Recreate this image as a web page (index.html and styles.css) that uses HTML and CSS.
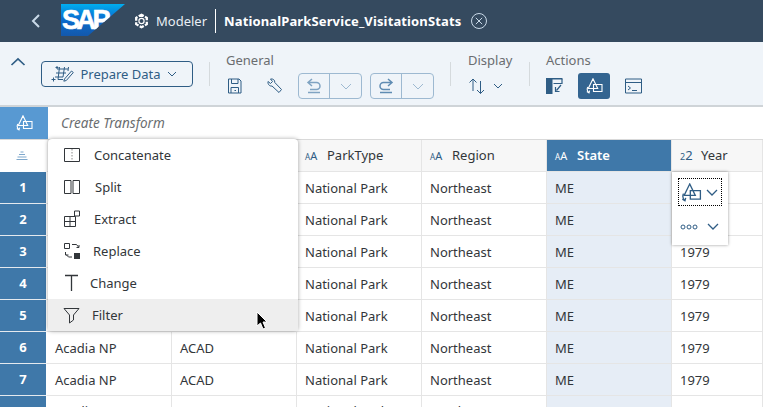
FILE: index.html
```html
<!DOCTYPE html>
<html lang="en">
<head>
    <meta charset="UTF-8">
    <title>Modeler - NationalParkService_VisitationStats</title>
    <link rel="stylesheet" href="styles.css">
</head>
<body>
    <svg class="defs" width="0" height="0">
        <symbol id="transform" viewBox="0 0 17 16">
            <path d="M7 .8 2.300 10.500h9.400zM7.500 6.500h8.500v7H7.500z" fill="none" stroke="currentColor" stroke-width="1.100"/>
            <path d="M1.800 9Q.2 11.800 2.800 14.800M.8 13.600l2.200 1.400.6-2.400" fill="none" stroke="currentColor" stroke-width="1.100"/>
        </symbol>
    </svg>

    <header class="shell">
        <svg class="back" width="10" height="16" viewBox="0 0 10 16"><path d="M8 2 2 8l6 6" fill="none" stroke="#c9d9e8" stroke-width="2"/></svg>
        <div class="logo"><span>SAP</span></div>
        <svg class="hex" width="15" height="16" viewBox="0 0 15 16"><path d="M7.500 1.800 12.800 4.800v6.400L7.500 14.200 2.200 11.200V4.800z" fill="none" stroke="#fff" stroke-width="2.300" stroke-dasharray="4.600 1.400" stroke-dashoffset="2"/><circle cx="7.500" cy="8" r="2.600" fill="none" stroke="#fff" stroke-width="1.200"/></svg>
        <span class="app">Modeler</span>
        <span class="file">NationalParkService_VisitationStats</span>
        <svg class="close" width="18" height="18" viewBox="0 0 18 18"><circle cx="9" cy="9" r="7.500" fill="none" stroke="#c9d9e8"/><path d="m5.800 5.800 6.400 6.400m0-6.400-6.400 6.400" stroke="#c9d9e8"/></svg>
    </header>

    <section class="toolbar">
        <svg class="collapse" width="16" height="10" viewBox="0 0 16 10"><path d="m1.500 8 6.500-6 6.500 6" fill="none" stroke="#2f5d85" stroke-width="1.700"/></svg>
        <button class="prepare">
            <svg width="24" height="18" viewBox="0 0 24 18"><path d="M7 4h11M6 8h10M5 12h8M9.500 2 8 14.500h5M14.500 2 13 12M18.500 2l-.5 4" fill="none" stroke="#2f5d85"/><path d="M3.500 12.500v4M1.500 14.500h4M7 1v3M5.500 2.500h3" fill="none" stroke="#2f5d85"/><path d="m14.500 14 7-8 1.800 1.500-7 8-2.500.7z" fill="none" stroke="#2f5d85"/></svg>
            <span>Prepare Data</span>
            <svg width="10" height="6" viewBox="0 0 10 6"><path d="m1 1 4 4 4-4" fill="none" stroke="#2f5d85"/></svg>
        </button>
        <div class="sep"></div>
        <div class="group general">
            <div class="group-title">General</div>
            <div class="group-items">
                <svg class="save" width="15" height="16" viewBox="0 0 15 16"><path d="M1.500 1h10.500l2 2v12H1.500zM4.500 1v4.500h6.500V1M4 15V9.500h7.500V15M7.500 12.500h1.500" fill="none" stroke="#2f5d85"/></svg>
                <svg class="wrench" width="16" height="16" viewBox="0 0 16 16"><path d="M1 3.500 3.500 5.500 5.500 3.500 3.500 1c2.500-.5 4.500 1 4.300 3.500l6.700 7-2.500 3-7-6.500C2.500 8.500.5 6 1 3.500z" fill="none" stroke="#2f5d85"/></svg>
                <div class="split-btn">
                    <div class="split-main"><svg width="16" height="16" viewBox="0 0 16 16"><path d="M6 1 2 4.500 6 8M2 4.500h8.500a3.500 3.500 0 0 1 0 7H4M2 14.500h12" fill="none" stroke="#7fa3c2" stroke-width="1.500"/></svg></div>
                    <div class="split-arrow"><svg width="12" height="7" viewBox="0 0 12 7"><path d="m1 1 5 5 5-5" fill="none" stroke="#9db9d1"/></svg></div>
                </div>
                <div class="split-btn">
                    <div class="split-main"><svg width="16" height="16" viewBox="0 0 16 16"><path d="M10 1l4 3.500L10 8M14 4.500H5.500a3.500 3.500 0 0 0 0 7H12M2 14.500h12" fill="none" stroke="#5f8cb3" stroke-width="1.500"/></svg></div>
                    <div class="split-arrow"><svg width="12" height="7" viewBox="0 0 12 7"><path d="m1 1 5 5 5-5" fill="none" stroke="#9db9d1"/></svg></div>
                </div>
            </div>
        </div>
        <div class="sep"></div>
        <div class="group display">
            <div class="group-title">Display</div>
            <div class="group-items">
                <svg width="18" height="18" viewBox="0 0 18 18"><path d="M5 14V2M1.500 5.500 5 2l3.500 3.500M12.500 4v12.500M9 13l3.500 3.500L16 13" fill="none" stroke="#2f5d85"/></svg>
                <svg class="display-caret" width="10" height="6" viewBox="0 0 10 6"><path d="m1 1 4 4 4-4" fill="none" stroke="#2f5d85"/></svg>
            </div>
        </div>
        <div class="sep"></div>
        <div class="group actions">
            <div class="group-title">Actions</div>
            <div class="group-items">
                <svg class="act" width="17" height="16" viewBox="0 0 17 16"><path d="M0 0h6.500v16H0zM0 0h16.500v1.500H0z" fill="#2f5d85"/><path d="M16 1v4.500H7.500M15 7l-4.500 5.500M9.500 9v4.500h4" fill="none" stroke="#2f5d85" stroke-width="1.200"/></svg>
                <div class="act-on"><svg width="17" height="16"><use href="#transform"/></svg></div>
                <svg class="act" width="17" height="16" viewBox="0 0 17 16"><path d="M.5 1h16v14H.5zM.5 4.500h16M3 8l2.500 2L3 12M7 12.500h5" fill="none" stroke="#2f5d85"/></svg>
            </div>
        </div>
    </section>

    <div class="formula">
        <div class="formula-icon"><svg width="17" height="16"><use href="#transform"/></svg></div>
        <div class="formula-text">Create Transform</div>
    </div>

    <main class="grid-wrap">
        <div class="row head">
            <div class="num corner"><svg width="12" height="10" viewBox="0 0 12 10"><path d="M4.500 1h3M3 3.500h6M1.500 6h9M.5 8.500h11" stroke="#7fa8cc" stroke-width="1.200"/></svg></div>
            <div class="cell"></div>
            <div class="cell"></div>
            <div class="cell"><span class="type"><small>A</small>A</span>ParkType</div>
            <div class="cell"><span class="type"><small>A</small>A</span>Region</div>
            <div class="cell sel"><span class="type"><small>A</small>A</span>State</div>
            <div class="cell"><span class="type type-num"><small>2</small>2</span>Year</div>
        </div>
        <div class="row"><div class="num">1</div><div class="cell"></div><div class="cell"></div><div class="cell">National Park</div><div class="cell">Northeast</div><div class="cell state">ME</div><div class="cell">1979</div></div>
        <div class="row"><div class="num">2</div><div class="cell"></div><div class="cell"></div><div class="cell">National Park</div><div class="cell">Northeast</div><div class="cell state">ME</div><div class="cell">1979</div></div>
        <div class="row"><div class="num">3</div><div class="cell"></div><div class="cell"></div><div class="cell">National Park</div><div class="cell">Northeast</div><div class="cell state">ME</div><div class="cell">1979</div></div>
        <div class="row"><div class="num">4</div><div class="cell"></div><div class="cell"></div><div class="cell">National Park</div><div class="cell">Northeast</div><div class="cell state">ME</div><div class="cell">1979</div></div>
        <div class="row"><div class="num">5</div><div class="cell"></div><div class="cell"></div><div class="cell">National Park</div><div class="cell">Northeast</div><div class="cell state">ME</div><div class="cell">1979</div></div>
        <div class="row"><div class="num">6</div><div class="cell">Acadia NP</div><div class="cell">ACAD</div><div class="cell">National Park</div><div class="cell">Northeast</div><div class="cell state">ME</div><div class="cell">1979</div></div>
        <div class="row"><div class="num">7</div><div class="cell">Acadia NP</div><div class="cell">ACAD</div><div class="cell">National Park</div><div class="cell">Northeast</div><div class="cell state">ME</div><div class="cell">1979</div></div>
        <div class="row last"><div class="num"></div><div class="cell">Acadia NP</div><div class="cell"></div><div class="cell">National Park</div><div class="cell">Northeast</div><div class="cell state"></div><div class="cell"></div></div>
    </main>

    <!-- transform dropdown -->
    <ul class="menu">
        <li><svg width="18" height="18" viewBox="0 0 18 18"><path d="M1.500 2.500h15v13h-15z" fill="none" stroke="#32363a"/><path d="M9 3v12" stroke="#888" stroke-dasharray="1.500 1.500"/></svg><span class="l-1">Concatenate</span></li>
        <li><svg width="18" height="18" viewBox="0 0 18 18"><path d="M1.500 2.500h6.500v13H1.500zM10 2.500h6.500v13H10z" fill="none" stroke="#32363a"/></svg><span class="l-2">Split</span></li>
        <li><svg width="18" height="18" viewBox="0 0 18 18"><path d="M1.500 6.500h11v10h-11zM7 6.500v10M1.500 11.500h11M11.500 1h5v5h-5z" fill="none" stroke="#32363a"/></svg><span class="l-1">Extract</span></li>
        <li><svg width="18" height="18" viewBox="0 0 18 18"><path d="M1.500 1.500h5v5h-5z" fill="none" stroke="#32363a"/><path d="M11 11h6v6h-6z" fill="#32363a"/><path d="M9 2.500h4.500l2 2.500M13.500 5.500h2.500V3M9 15H5.500L3 12.500M2.500 10v3h3" fill="none" stroke="#32363a"/></svg><span class="l-3">Replace</span></li>
        <li><svg width="18" height="20" viewBox="0 0 18 20"><path d="M2 2.500h13M8.500 2.500V18" fill="none" stroke="#32363a" stroke-width="1.300"/></svg><span class="l-4">Change</span></li>
        <li class="hover"><svg width="18" height="18" viewBox="0 0 18 18"><path d="M1 2.500h15L10.500 9v5l-4 3V9z" fill="none" stroke="#32363a"/></svg><span class="l-5">Filter</span></li>
    </ul>

    <svg class="cursor" width="13" height="19" viewBox="0 0 13 19"><path d="M1 1v14l3.500-3 2.500 6 2.500-1-2.500-6H11z" fill="#000" stroke="#fff"/></svg>

    <!-- column quick actions -->
    <div class="quick">
        <div class="quick-row focus">
            <svg class="q-icon" width="21" height="19"><use href="#transform"/></svg>
            <svg width="12" height="7" viewBox="0 0 12 7"><path d="m1 1 5 5 5-5" fill="none" stroke="#2f5d85" stroke-width="1.300"/></svg>
        </div>
        <div class="quick-row">
            <svg class="q-icon" width="18" height="6" viewBox="0 0 18 6"><circle cx="3" cy="3" r="2" fill="none" stroke="#2f5d85"/><circle cx="9" cy="3" r="2" fill="none" stroke="#2f5d85"/><circle cx="15" cy="3" r="2" fill="none" stroke="#2f5d85"/></svg>
            <svg width="12" height="7" viewBox="0 0 12 7"><path d="m1 1 5 5 5-5" fill="none" stroke="#2f5d85" stroke-width="1.300"/></svg>
        </div>
    </div>
</body>
</html>
```

FILE: styles.css
```css
html {
    overflow: hidden;
}

body {
    margin: 0;
    width: 763px;
    height: 407px;
    overflow: hidden;
    position: relative;
    font-family: "Noto Sans", "Liberation Sans", sans-serif;
    font-size: 13px;
    color: #32363a;
    background-color: #fff;
}

.defs {
    position: absolute;
}

/* Shell bar */
.shell {
    height: 42px;
    background-color: #354a5f;
    display: flex;
    align-items: center;
    color: #fff;
}

.back {
    margin-left: 31px;
}

.logo {
    width: 64px;
    height: 32px;
    margin-left: 20px;
    margin-bottom: 2px;
    background: linear-gradient(#00aeef, #0a6ed1 45%, #1358ab);
    clip-path: polygon(0 0, 100% 0, 42% 100%, 0 100%);
}

.logo span {
    display: block;
    font-family: "Liberation Sans", sans-serif;
    font-size: 27px;
    font-weight: bold;
    letter-spacing: -3.500px;
    line-height: 32px;
    padding-left: 1px;
    color: #fff;
    -webkit-text-stroke: 0.6px #fff;
}

.hex {
    margin-left: 9px;
}

.app {
    margin-left: 7px;
    padding-right: 8px;
    border-right: 1px solid #fff;
    line-height: 24px;
    color: #e8eef4;
}

.file {
    margin-left: 8px;
    font-weight: bold;
    letter-spacing: 0.13px;
}

.close {
    margin-left: 9px;
}

/* Toolbar */
.toolbar {
    height: 63px;
    background-color: #eff4f9;
    border-bottom: 2px solid #cfd4d8;
    display: flex;
    align-items: flex-start;
}

.collapse {
    margin: 15px 0 0 10px;
}

.prepare {
    margin: 19px 0 0 15px;
    width: 152px;
    height: 26px;
    padding: 0 15px 0 8px;
    border: 1px solid #2f5d85;
    border-radius: 4px;
    background-color: transparent;
    color: #2f5d85;
    font-family: inherit;
    font-size: 13px;
    display: flex;
    align-items: center;
    justify-content: space-between;
}

.sep {
    width: 1px;
    height: 24px;
    margin-top: 20px;
    background-color: #d5dadd;
}

.toolbar > .prepare + .sep {
    margin-left: 16px;
}

.group-title {
    color: #6a6d70;
    line-height: 18px;
    margin-top: 9px;
}

.group-items {
    display: flex;
    align-items: center;
    height: 28px;
    margin-top: 3px;
}

.general {
    margin-left: 16px;
    width: 224px;
}

.save {
    margin-left: 1px;
}

.wrench {
    margin-left: 25px;
}

.split-btn {
    display: flex;
    height: 24px;
    border: 1px solid #9db9d1;
    border-radius: 4px;
    margin-left: 15px;
    align-items: center;
}

.split-btn + .split-btn {
    margin-left: 8px;
}

.split-main {
    width: 30px;
    height: 24px;
    border-right: 1px solid #9db9d1;
    display: flex;
    align-items: center;
    justify-content: center;
}

.split-arrow {
    width: 31px;
    display: flex;
    justify-content: center;
}

.display {
    margin-left: 17px;
    width: 61px;
}

.display-caret {
    margin-left: 7px;
}

.actions {
    margin-left: 16px;
}

.act-on {
    width: 32px;
    height: 26px;
    margin: 0 15px;
    border-radius: 3px;
    background-color: #336490;
    color: #fff;
    display: flex;
    align-items: center;
    justify-content: center;
}

/* Formula bar */
.formula {
    height: 32px;
    display: flex;
    border-bottom: 1px solid #d9d9d9;
}

.formula-icon {
    width: 48px;
    background-color: #5899d2;
    color: #fff;
    display: flex;
    align-items: center;
    justify-content: center;
}

.formula-text {
    padding-left: 13px;
    line-height: 32px;
    font-size: 13.5px;
    font-style: italic;
    color: #6a6d70;
}

/* Data grid */
.grid-wrap {
    height: 267px;
    overflow: hidden;
}

.row {
    display: grid;
    grid-template-columns: 47px repeat(5, 125px) 1fr;
    height: 32px;
}

.num {
    background-color: #3f78a9;
    color: #fff;
    font-weight: bold;
    text-align: center;
    line-height: 31px;
    border-bottom: 1px solid #e4e9ee;
    border-right: 1px solid #fff;
}

.corner {
    background-color: #fff;
    display: flex;
    align-items: center;
    justify-content: center;
    border-bottom: 0;
    height: 31px;
    padding-right: 3px;
}

.cell {
    padding-left: 8px;
    line-height: 33px;
    height: 31px;
    border-bottom: 1px solid #e5e5e5;
    border-right: 1px solid #e5e5e5;
    white-space: nowrap;
}

.last .cell {
    line-height: 30px;
}

.head .cell {
    background-color: #f7f7f7;
    line-height: 31px;
}

.head .cell.sel {
    background-color: #3f78a9;
    color: #fff;
    font-weight: 600;
}

.state {
    background-color: #e6edf6;
}

.type {
    display: inline-block;
    width: 22px;
    color: #2f5d85;
    font-size: 11px;
    font-weight: normal;
}

.type small {
    font-size: 8px;
}

.sel .type {
    color: #fff;
}

.type-num {
    width: 21px;
    font-size: 13px;
}

.type-num small {
    font-size: 9px;
}

/* Dropdown */
.menu {
    position: absolute;
    left: 48px;
    top: 139px;
    width: 250px;
    margin: 0;
    padding: 0;
    list-style: none;
    background-color: #fff;
    border-radius: 4px;
    box-shadow: 0 0 4px rgba(0, 0, 0, 0.35);
}

.menu li {
    height: 32px;
    display: flex;
    align-items: center;
    padding-left: 15px;
}

.menu .hover {
    background-color: #eeeeee;
}

.l-1 {
    margin-left: 13px;
}

.l-2 {
    margin-left: 14px;
}

.l-3 {
    margin-left: 12px;
}

.l-4 {
    margin-left: 9px;
}

.l-5 {
    margin-left: 11px;
}

.cursor {
    position: absolute;
    left: 256px;
    top: 311px;
}

/* Column popup */
.quick {
    position: absolute;
    left: 672px;
    top: 172px;
    width: 56px;
    height: 73px;
    box-sizing: border-box;
    padding: 6px;
    background-color: #fff;
    box-shadow: 0 0 3px rgba(0, 0, 0, 0.4);
}

.quick-row {
    height: 27px;
    width: 44px;
    box-sizing: border-box;
    display: flex;
    align-items: center;
    justify-content: space-between;
    padding: 0 3px 0 1px;
    color: #2f5d85;
}

.quick-row + .quick-row {
    margin-top: 7px;
}

.focus {
    height: 28px;
    border: 1px dotted #000;
}

.q-icon {
    margin-left: 1px;
}
```
